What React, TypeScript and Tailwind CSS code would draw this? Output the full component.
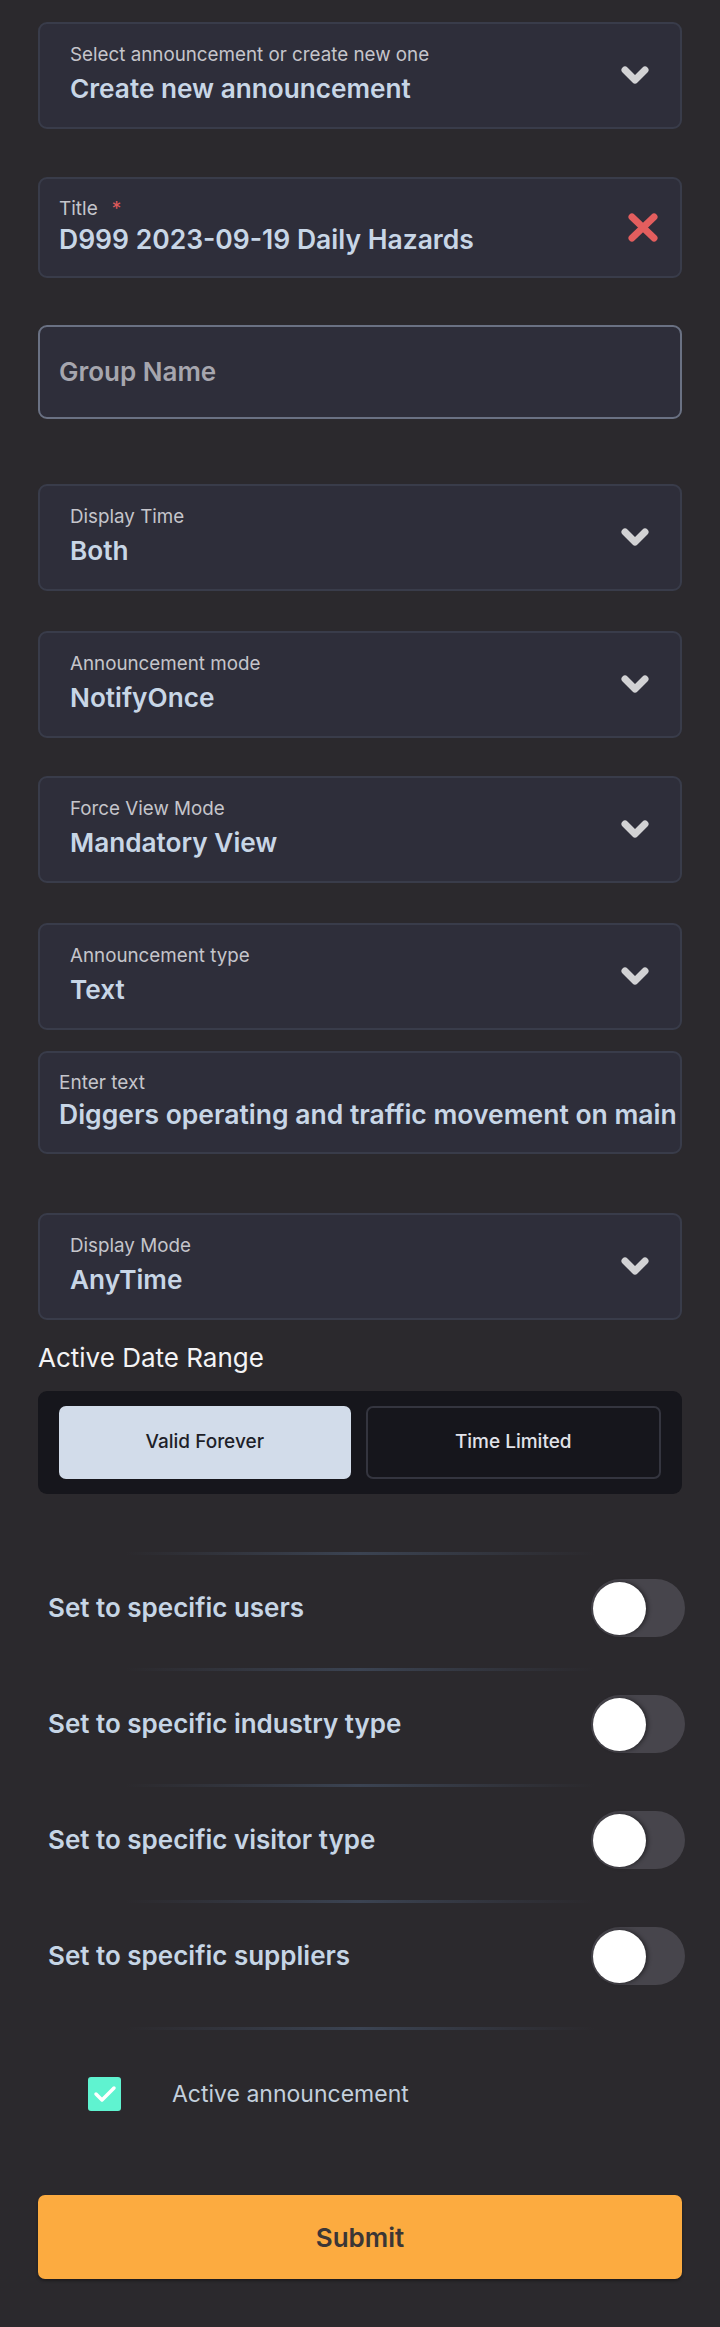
import React, { useState } from "react";

function Chevron() {
  return (
    <svg width="28" height="18" viewBox="0 0 28 18" className="shrink-0">
      <path d="M4 4 L14 14 L24 4" fill="none" stroke="#d2d2d4" strokeWidth="7" strokeLinecap="round" strokeLinejoin="round" />
    </svg>
  );
}

function RedX() {
  return (
    <svg width="30" height="29" viewBox="0 0 30 29" className="shrink-0">
      <path d="M4 4 L26 25 M26 4 L4 25" fill="none" stroke="#e35e5e" strokeWidth="7" strokeLinecap="round" />
    </svg>
  );
}

function SelectBox({ label, value, className = "" }: { label: string; value: string; className?: string }) {
  return (
    <div
      className={`flex items-center justify-between rounded-[9px] border-2 border-[#393c4a] bg-[#2e2e3a] pl-[30px] pr-[31px] pt-[20px] pb-[22px] ${className}`}
    >
      <div className="flex flex-col">
        <span className="text-[18.8px] leading-[22px] text-[#c5c5cb]">{label}</span>
        <span className="mt-[7px] text-[26.2px] leading-[32px] font-semibold text-[#c8d6e6]">{value}</span>
      </div>
      <Chevron />
    </div>
  );
}

function Divider() {
  return <div className="mx-auto h-[3px] w-[470px] bg-linear-to-r from-transparent via-[#3b4352] to-transparent" />;
}

function ToggleRow({ label, on, onToggle, last }: { label: string; on: boolean; onToggle: () => void; last?: boolean }) {
  return (
    <>
      <Divider />
      <div className={`flex items-center justify-between pl-[10px] -mr-[3px] pt-[24px] ${last ? "pb-[42px]" : "pb-[31px]"}`}>
        <span className="text-[26px] leading-[32px] font-semibold text-[#c6d5e5]">{label}</span>
        <button
          onClick={onToggle}
          className={`relative h-[58px] w-[94px] rounded-full ${on ? "bg-[#5ef2cf]" : "bg-[#47454c]"}`}
        >
          <span
            className={`absolute top-[2.5px] h-[53px] w-[53px] rounded-full bg-white shadow-[2px_0_4px_rgba(0,0,0,0.45)] ${on ? "left-[39px]" : "left-[2px]"}`}
          />
        </button>
      </div>
    </>
  );
}

export default function App() {
  const [forever, setForever] = useState(true);
  const [toggles, setToggles] = useState([false, false, false, false]);
  const [active, setActive] = useState(true);

  const labels = [
    "Set to specific users",
    "Set to specific industry type",
    "Set to specific visitor type",
    "Set to specific suppliers",
  ];

  return (
    <div className="min-h-[2327px] bg-[#2b292d] px-[38px] pt-[22px] pb-[49px] [font-family:Inter,sans-serif]">
      <SelectBox label="Select announcement or create new one" value="Create new announcement" />

      {/* Title */}
      <div className="mt-[48px] flex items-center justify-between rounded-[9px] border-2 border-[#393c4a] bg-[#2e2e3a] pl-[19px] pr-[22px] pt-[19px] pb-[20px]">
        <div className="flex flex-col">
          <span className="text-[19px] leading-[22px] text-[#c5c5cb]">
            Title<span className="ml-[14px] text-[#e05a5a]">*</span>
          </span>
          <span className="mt-[3px] text-[26.5px] leading-[33px] font-semibold text-[#c8d6e6]">D999 2023-09-19 Daily Hazards</span>
        </div>
        <RedX />
      </div>

      {/* Group name */}
      <div className="mt-[47px] flex h-[94px] items-center rounded-[9px] border-2 border-[#6a7183] bg-[#2e2e3a] pl-[19px]">
        <span className="text-[26px] leading-[32px] font-semibold text-[#a6a6ae]">Group Name</span>
      </div>

      <SelectBox className="mt-[65px]" label="Display Time" value="Both" />
      <SelectBox className="mt-[40px]" label="Announcement mode" value="NotifyOnce" />
      <SelectBox className="mt-[38px]" label="Force View Mode" value="Mandatory View" />
      <SelectBox className="mt-[40px]" label="Announcement type" value="Text" />

      {/* Enter text */}
      <div className="mt-[21px] overflow-hidden rounded-[9px] border-2 border-[#393c4a] bg-[#2e2e3a] pl-[19px] pt-[19px] pb-[21px]">
        <div className="text-[19px] leading-[22px] text-[#c5c5cb]">Enter text</div>
        <div className="mt-[4px] whitespace-nowrap text-[26.5px] leading-[33px] font-semibold text-[#c8d6e6]">
          Diggers operating and traffic movement on main access road
        </div>
      </div>

      <SelectBox className="mt-[59px]" label="Display Mode" value="AnyTime" />

      <div className="mt-[22px] text-[26px] leading-[32px] text-[#f3f3f5]">Active Date Range</div>

      <div className="mt-[17px] flex gap-[15px] rounded-[9px] bg-[#16161c] px-[21px] py-[15px]">
        <button
          onClick={() => setForever(true)}
          className={`flex h-[73px] flex-1 items-center justify-center rounded-[7px] text-[19px] font-medium ${
            forever ? "bg-[#d2dcea] text-[#1e1f29]" : "border-2 border-[#34353f] text-[#e2e3ea]"
          }`}
        >
          Valid Forever
        </button>
        <button
          onClick={() => setForever(false)}
          className={`flex h-[73px] flex-1 items-center justify-center rounded-[7px] text-[19px] font-medium ${
            !forever ? "bg-[#d2dcea] text-[#1e1f29]" : "border-2 border-[#34353f] text-[#e2e3ea]"
          }`}
        >
          Time Limited
        </button>
      </div>

      <div className="mt-[58px]">
        {labels.map((l, i) => (
          <ToggleRow
            key={l}
            label={l}
            on={toggles[i]}
            last={i === labels.length - 1}
            onToggle={() => setToggles((t) => t.map((v, j) => (j === i ? !v : v)))}
          />
        ))}
        <Divider />
      </div>

      <div className="mt-[47px] flex items-center pl-[50px]">
        <button
          onClick={() => setActive((a) => !a)}
          className={`flex h-[34px] w-[33px] items-center justify-center rounded-[3px] ${active ? "bg-[#5ff3d0]" : "border-2 border-[#c3cfdc]"}`}
        >
          {active && (
            <svg width="24" height="20" viewBox="0 0 24 20">
              <path d="M3 10 L9 16 L21 4" fill="none" stroke="white" strokeWidth="3.5" strokeLinecap="round" strokeLinejoin="round" />
            </svg>
          )}
        </button>
        <span className="ml-[51px] text-[23px] leading-[30px] text-[#c3cfdc]">Active announcement</span>
      </div>

      <button className="mt-[84px] flex h-[84px] w-full items-center justify-center rounded-[7px] bg-[#fcab40] text-[26px] font-semibold text-[#3b3636] shadow-[0_2px_3px_rgba(0,0,0,0.35)]">
        Submit
      </button>
    </div>
  );
}
